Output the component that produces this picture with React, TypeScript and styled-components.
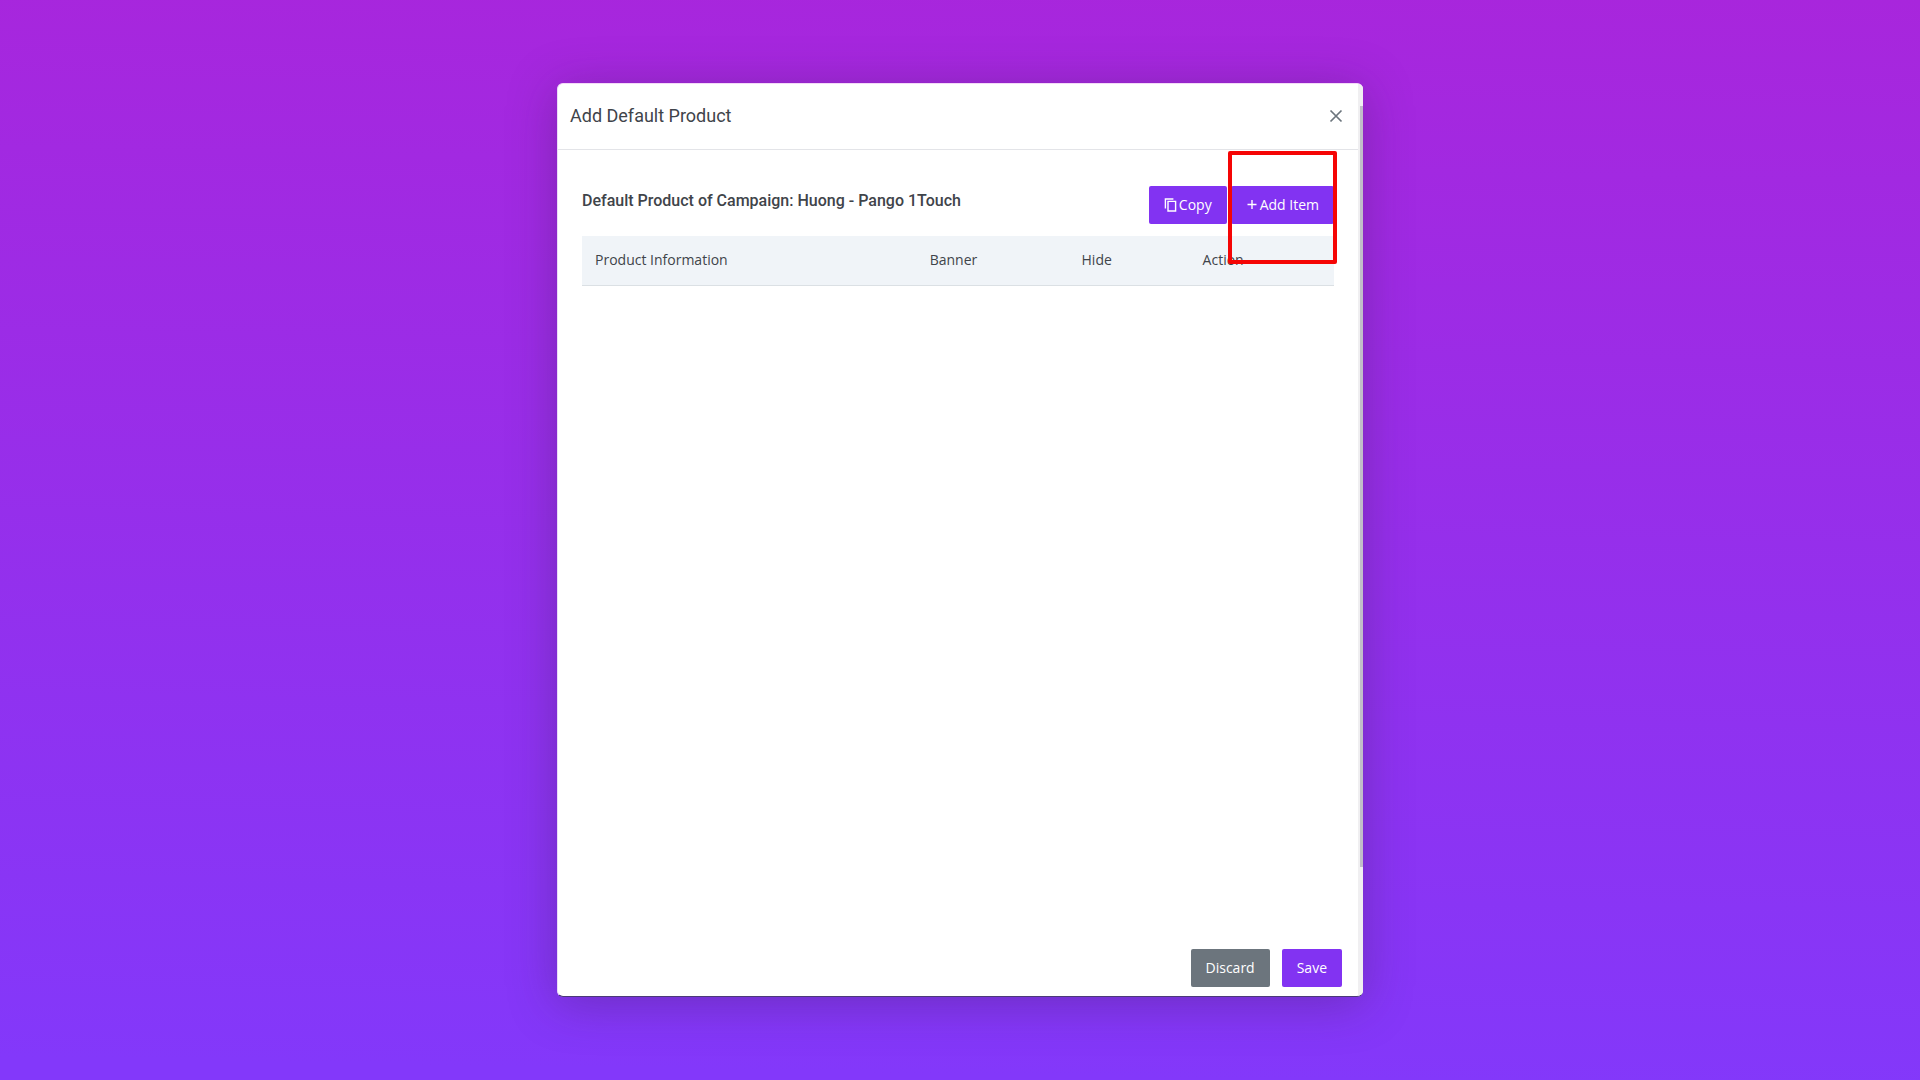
import React from "react";
import styled, { createGlobalStyle } from "styled-components";

const GlobalStyle = createGlobalStyle`
  *, *::before, *::after { box-sizing: border-box; }
  body {
    margin: 0;
    color: #3f444a;
    font-family: "Open Sans", "Noto Sans", sans-serif;
    font-size: 14px;
    line-height: 20px;
  }
`;

const Page = styled.main`
  display: flex;
  justify-content: center;
  min-height: 100vh;
  padding: 83px 24px;
  background: linear-gradient(181deg, #a826dc 0%, #8338fa 98%);
`;

const Dialog = styled.section`
  display: flex;
  width: 100%;
  max-width: 806px;
  overflow: hidden;
  border-radius: 6px;
  background: #ffffff;
  border-top: 1px solid #f3d9f8;
  border-left: 1px solid #eadcf8;
  border-bottom: 1px solid #4b3a78;
`;

const Shade = styled.div`
  display: flex;
  justify-content: center;
  width: 100%;
  max-width: 806px;
  border-radius: 6px;
  box-shadow: 0 6px 48px rgba(60, 30, 80, 0.34);
`;

const Content = styled.div`
  display: flex;
  flex: 1;
  flex-direction: column;
  min-width: 0;
`;

const Track = styled.div`
  flex: none;
  width: 5px;
  padding: 22px 0 129px 2px;
  background: #f0eff1;
`;

const Thumb = styled.div`
  height: 100%;
  background: #c1bdc9;
`;

const Header = styled.header`
  display: flex;
  align-items: center;
  justify-content: space-between;
  height: 66px;
  padding: 0 11px 2px 12px;
  border-bottom: 1px solid #e3e4e8;
`;

const Title = styled.h1`
  margin: 0;
  font: 400 18px/24px Roboto, sans-serif;
`;

const CloseButton = styled.button`
  display: flex;
  padding: 4px;
  border: 0;
  background: none;
  color: #6c757d;
  cursor: pointer;
`;

const Body = styled.div`
  flex: 1;
  padding: 36px 24px;
`;

const Toolbar = styled.div`
  display: flex;
  justify-content: space-between;
  margin-bottom: 12px;
`;

const Heading = styled.h2`
  margin: 0;
  padding-top: 3px;
  font: 500 16px/24px Roboto, sans-serif;
`;

const Actions = styled.div`
  display: flex;
  gap: 4px;
`;

const Button = styled.button<{ $tone?: "primary" | "muted" }>`
  display: flex;
  align-items: center;
  justify-content: center;
  gap: 2px;
  height: 38px;
  padding: 0 15px;
  border: 0;
  border-radius: 2px;
  background: ${({ $tone }) => ($tone === "muted" ? "#6c757d" : "#8233f2")};
  color: #ffffff;
  font: 500 14px/20px "Open Sans", "Noto Sans", sans-serif;
  white-space: nowrap;
  cursor: pointer;
`;

const Highlighted = styled.div`
  position: relative;

  &::after {
    content: "";
    position: absolute;
    inset: -35px -3px -40px;
    border: 4px solid #f50505;
    border-radius: 2px;
    pointer-events: none;
  }
`;

const Table = styled.table`
  width: 100%;
  border-collapse: collapse;
  table-layout: fixed;
`;

const HeadCell = styled.th`
  height: 49px;
  padding: 0 13px;
  border-bottom: 1px solid #dbe0e4;
  background: #f0f4f8;
  font-weight: 500;
  text-align: left;
`;

const Footer = styled.footer`
  display: flex;
  justify-content: flex-end;
  gap: 12px;
  padding: 9px 16px;
`;

const columns = [
  { label: "Product Information", width: "44.5%" },
  { label: "Banner", width: "20.2%" },
  { label: "Hide", width: "16.1%" },
  { label: "Action", width: "19.2%" },
];

export default function App() {
  return (
    <>
      <GlobalStyle />
      <Page>
        <Shade>
          <Dialog role="dialog" aria-labelledby="dialog-title">
            <Content>
              <Header>
                <Title id="dialog-title">Add Default Product</Title>
                <CloseButton type="button" aria-label="Close">
                  <svg width="14" height="14" viewBox="0 0 14 14" fill="none" stroke="currentColor" strokeWidth="1.7">
                    <path d="M1.5 1.5l11 11M12.5 1.5l-11 11" />
                  </svg>
                </CloseButton>
              </Header>
              <Body>
                <Toolbar>
                  <Heading>Default Product of Campaign: Huong - Pango 1Touch</Heading>
                  <Actions>
                    <Button type="button">
                      <svg width="13" height="14" viewBox="0 0 13 14" fill="none" stroke="currentColor" strokeWidth="1.4">
                        <path d="M4 3.4h7.6v9.6H4zM1.4 10.4V1h8" />
                      </svg>
                      Copy
                    </Button>
                    <Highlighted>
                      <Button type="button">
                        <svg width="12" height="14" viewBox="0 0 12 14" fill="none" stroke="currentColor" strokeWidth="1.4">
                          <path d="M6 2v9M1.5 6.5h9" />
                        </svg>
                        Add Item
                      </Button>
                    </Highlighted>
                  </Actions>
                </Toolbar>
                <Table>
                  <colgroup>
                    {columns.map((column) => (
                      <col key={column.label} style={{ width: column.width }} />
                    ))}
                  </colgroup>
                  <thead>
                    <tr>
                      {columns.map((column) => (
                        <HeadCell key={column.label} scope="col">{column.label}</HeadCell>
                      ))}
                    </tr>
                  </thead>
                </Table>
              </Body>
              <Footer>
                <Button type="button" $tone="muted">Discard</Button>
                <Button type="button">Save</Button>
              </Footer>
            </Content>
            <Track>
              <Thumb />
            </Track>
          </Dialog>
        </Shade>
      </Page>
    </>
  );
}
